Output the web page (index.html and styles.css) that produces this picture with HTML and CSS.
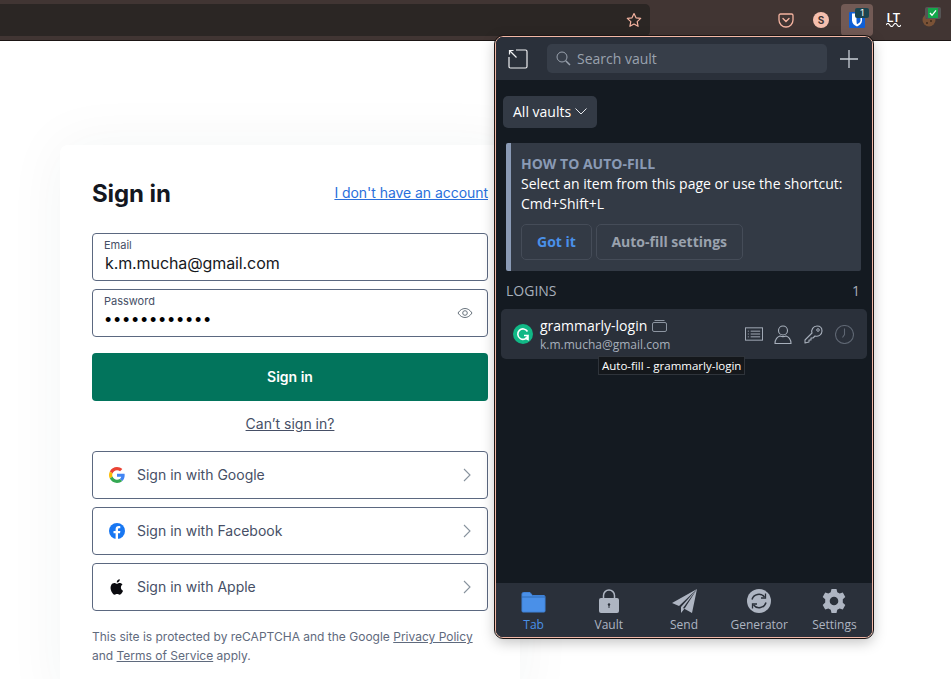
FILE: index.html
```html
<!DOCTYPE html>
<html lang="en">
<head>
    <meta charset="UTF-8">
    <title>Sign in</title>
    <link rel="stylesheet" href="styles.css">
</head>
<body>
    <header class="toolbar">
        <div class="urlbar">
            <svg class="star" width="16" height="16" viewBox="0 0 16 16"><path d="M8 1.500l2 4.300 4.700.6-3.500 3.200.9 4.700L8 12l-4.100 2.300.9-4.700L1.300 6.400 6 5.800z" fill="none" stroke="#f4b3a0" stroke-width="1.200" stroke-linejoin="round"/></svg>
        </div>
        <div class="extensions">
            <svg class="ext-pocket" width="16" height="15" viewBox="0 0 16 15"><path d="M1 2.500A1.500 1.500 0 0 1 2.500 1h11A1.500 1.500 0 0 1 15 2.500V7a7 7 0 0 1-14 0z" fill="none" stroke="#f4b3a0" stroke-width="1.300"/><path d="M5 5.500L8 8.500l3-3" fill="none" stroke="#f4b3a0" stroke-width="1.400" stroke-linecap="round"/></svg>
            <span class="ext-s">S</span>
            <div class="ext-bitwarden">
                <svg width="16" height="16" viewBox="0 0 16 16"><rect width="16" height="16" rx="1" fill="#0f5fd6"/><path d="M3 1.500h10v7c0 3-2.500 4.800-5 6-2.500-1.200-5-3-5-6z" fill="#fff"/><path d="M7.500 2h4v6.500c0 1.800-1.800 3-3.500 3.800-.4-1-.5-2.500-.5-4z" fill="#0f5fd6"/></svg>
                <span class="badge">1</span>
            </div>
            <div class="ext-lt">
                <span>LT</span>
                <svg width="15" height="4" viewBox="0 0 16 4"><path d="M0 2q2-3.500 4 0t4 0 4 0 4 0" fill="none" stroke="#fff" stroke-width="1.200"/></svg>
            </div>
            <div class="ext-cookie">
                <svg width="14" height="14" viewBox="0 0 14 14"><circle cx="7" cy="7" r="6.500" fill="#7a5236"/><circle cx="5" cy="5" r="1" fill="#3d2a1c"/><circle cx="9" cy="8" r="1" fill="#3d2a1c"/><circle cx="5" cy="10" r="1" fill="#3d2a1c"/></svg>
                <span class="check"><svg width="10" height="10" viewBox="0 0 10 10"><rect width="10" height="10" fill="#12a84a"/><path d="M2 5l2 2.300L8 2.300" fill="none" stroke="#fff" stroke-width="1.300"/></svg></span>
            </div>
        </div>
    </header>

    <main class="page">
        <section class="card">
            <div class="card-head">
                <h1>Sign in</h1>
                <a href="#" class="link-blue">I don't have an account</a>
            </div>
            <div class="field">
                <label>Email</label>
                <div class="value">k.m.mucha@gmail.com</div>
            </div>
            <div class="field">
                <label>Password</label>
                <div class="value dots">••••••••••••</div>
                <svg class="eye" width="16" height="12" viewBox="0 0 16 12"><path d="M1 6c2-3 4.300-4.500 7-4.500S13 3 15 6c-2 3-4.300 4.500-7 4.500S3 9 1 6z" fill="none" stroke="#68737d" stroke-width="1"/><circle cx="8" cy="6" r="2.300" fill="none" stroke="#68737d" stroke-width="1"/></svg>
            </div>
            <button class="submit">Sign in</button>
            <a href="#" class="cant">Can’t sign in?</a>
            <div class="social">
                <svg width="16" height="16" viewBox="0 0 48 48"><path fill="#EA4335" d="M24 9.500c3.500 0 6.700 1.200 9.200 3.600l6.900-6.900C35.900 2.400 30.500 0 24 0 14.600 0 6.500 5.400 2.600 13.200l8 6.200C12.500 13.700 17.800 9.500 24 9.500z"/><path fill="#4285F4" d="M47 24.500c0-1.600-.1-3.100-.4-4.500H24v9h12.900c-.6 3-2.200 5.500-4.800 7.200l7.700 6C44.300 38 47 31.800 47 24.500z"/><path fill="#FBBC05" d="M10.500 28.600c-.5-1.400-.8-3-.8-4.600s.3-3.200.8-4.600l-8-6.200C1 16.400 0 20.100 0 24s1 7.600 2.600 10.800z"/><path fill="#34A853" d="M24 48c6.500 0 11.900-2.100 15.900-5.800l-7.700-6c-2.200 1.500-5 2.300-8.200 2.300-6.200 0-11.500-4.200-13.400-9.900l-8 6.200C6.500 42.600 14.600 48 24 48z"/></svg>
                <span class="social-label">Sign in with Google</span>
                <svg class="chev" width="8" height="14" viewBox="0 0 8 14"><path d="M1 1l6 6-6 6" fill="none" stroke="#87929d" stroke-width="1.100"/></svg>
            </div>
            <div class="social">
                <svg width="16" height="16" viewBox="0 0 16 16"><circle cx="8" cy="8" r="8" fill="#1877f2"/><path d="M11 10.300l.4-2.300H9V6.500c0-.7.300-1.200 1.300-1.200h1V3.300S10.500 3.100 9.600 3.100C7.800 3.100 6.600 4.200 6.600 6.200V8H4.500v2.300h2.100v5.600c.8.100 1.600.100 2.400 0v-5.600z" fill="#fff"/></svg>
                <span class="social-label">Sign in with Facebook</span>
                <svg class="chev" width="8" height="14" viewBox="0 0 8 14"><path d="M1 1l6 6-6 6" fill="none" stroke="#87929d" stroke-width="1.100"/></svg>
            </div>
            <div class="social">
                <svg width="16" height="16" viewBox="2.200 1.800 11.800 12.800"><path d="M11.200 8.500c0-1.500 1.200-2.200 1.300-2.300-.7-1-1.800-1.200-2.200-1.200-.9-.1-1.800.6-2.300.6s-1.200-.6-2-.6c-1 0-2 .6-2.500 1.500-1.100 1.900-.3 4.700.8 6.200.5.800 1.100 1.600 1.900 1.600s1.100-.5 2-.5 1.200.5 2 .5 1.400-.8 1.900-1.500c.6-.9.800-1.700.8-1.700s-1.700-.7-1.700-2.600zM9.700 3.800c.4-.5.700-1.200.6-1.900-.6 0-1.300.4-1.800.9-.4.500-.7 1.200-.6 1.800.7.100 1.300-.3 1.800-.8z" fill="#0b0b0f"/></svg>
                <span class="social-label">Sign in with Apple</span>
                <svg class="chev" width="8" height="14" viewBox="0 0 8 14"><path d="M1 1l6 6-6 6" fill="none" stroke="#87929d" stroke-width="1.100"/></svg>
            </div>
            <p class="legal">This site is protected by reCAPTCHA and the Google <a href="#">Privacy Policy</a> and <a href="#">Terms of Service</a> apply.</p>
        </section>
    </main>

    <aside class="popup">
        <div class="popup-top">
            <svg class="popout" width="20" height="20" viewBox="0 0 20 20"><path d="M8 1H17.500A1.500 1.500 0 0 1 19 2.500V17.500A1.500 1.500 0 0 1 17.500 19H2.500A1.500 1.500 0 0 1 1 17.500V8" fill="none" stroke="#f0f1f3" stroke-width="1.200"/><path d="M1.500 5.500v-4h4M1.500 1.500L8.500 8.500" fill="none" stroke="#f0f1f3" stroke-width="1.200"/></svg>
            <div class="search">
                <svg width="15" height="15" viewBox="0 0 15 15"><circle cx="6" cy="6" r="5" fill="none" stroke="#9aa2ae" stroke-width="1"/><path d="M9.700 9.700L14 14" stroke="#9aa2ae" stroke-width="1.500"/></svg>
                <span>Search vault</span>
            </div>
            <svg class="plus" width="20" height="20" viewBox="0 0 20 20"><path d="M10 1v18M1 10h18" stroke="#c9ced6" stroke-width="1.300"/></svg>
        </div>
        <div class="popup-body">
            <div class="vaults">All vaults
                <svg width="12" height="7" viewBox="0 0 12 7"><path d="M.5.500L6 6l5.500-5.500" fill="none" stroke="#e6e8ec" stroke-width="1"/></svg>
            </div>
            <div class="callout">
                <h2>HOW TO AUTO-FILL</h2>
                <p>Select an item from this page or use the shortcut: Cmd+Shift+L</p>
                <div class="callout-btns">
                    <span class="btn btn-blue">Got it</span>
                    <span class="btn btn-settings">Auto-fill settings</span>
                </div>
            </div>
            <div class="list-head"><span>LOGINS</span><span>1</span></div>
            <div class="login">
                <span class="g-icon"><svg width="14" height="14" viewBox="0 0 14 14"><path d="M11.500 4.500A5.200 5.200 0 1 0 12 8.500H8M9 11l3 1.500V9" fill="none" stroke="#fff" stroke-width="1.600"/></svg></span>
                <div class="login-text">
                    <div class="login-name">grammarly-login
                        <svg width="15" height="13" viewBox="0 0 15 13"><rect x=".5" y="3.500" width="14" height="9" rx="1.500" fill="none" stroke="#8d95a1"/><path d="M2.500 1.500h10" stroke="#8d95a1"/></svg>
                    </div>
                    <div class="login-user">k.m.mucha@gmail.com</div>
                </div>
                <div class="login-actions">
                    <svg class="doc" width="18" height="14" viewBox="0 0 19 14"><rect x=".5" y=".5" width="18" height="13" fill="none" stroke="#a7afbb"/><path d="M3 4h1M3 7h1M3 10h1M6 4h10M6 7h10M6 10h10" stroke="#a7afbb"/></svg>
                    <svg width="18" height="19" viewBox="0 0 18 19"><circle cx="9" cy="5.500" r="4.500" fill="none" stroke="#a7afbb" stroke-width="1.100"/><path d="M1 18.500c0-4 2.500-7 5-7.500 2 .8 4 .8 6 0 2.500.5 5 3.500 5 7.500z" fill="none" stroke="#a7afbb" stroke-width="1.100"/></svg>
                    <svg width="19" height="19" viewBox="0 0 19 19"><path d="M1 18v-3l7-7c-1-3 1-7 5-7 3 0 5 2 5 5 0 4-4 6-7 5l-2 2H7v2H5v2z" fill="none" stroke="#a7afbb" stroke-width="1.100" stroke-linejoin="round"/><circle cx="14" cy="5" r="1.300" fill="none" stroke="#a7afbb"/></svg>
                    <svg width="19" height="19" viewBox="0 0 19 19"><circle cx="9.500" cy="9.500" r="9" fill="none" stroke="#5e6672" stroke-width="1.100"/><path d="M9.500 3.500v6l-2 3" fill="none" stroke="#5e6672" stroke-width="1.100"/></svg>
                </div>
            </div>
            <div class="tooltip">Auto-fill - grammarly-login</div>
        </div>
        <nav class="tabs">
            <div class="tab active">
                <svg width="25" height="22" viewBox="0 0 25 22"><path d="M1 3a1.500 1.500 0 0 1 1.500-1.500H9L11.500 4.500H23a1.200 1.200 0 0 1 1 1.200V20a1 1 0 0 1-1 1H2a1 1 0 0 1-1-1z" fill="#4a90e8" stroke="#3f82d8"/><path d="M1 6h23" stroke="#2f6db8"/></svg>
                <span>Tab</span>
            </div>
            <div class="tab">
                <svg width="20" height="24" viewBox="0 0 20 24"><path d="M4.500 10V6.500a5.500 5.500 0 0 1 11 0V10" fill="none" stroke="#aeb5c2" stroke-width="1.500"/><rect y="9" width="20" height="15" rx="2" fill="#aeb5c2"/><circle cx="10" cy="15.500" r="1.200" fill="#2a303a"/><path d="M10 16v3" stroke="#2a303a" stroke-width="1"/></svg>
                <span>Vault</span>
            </div>
            <div class="tab">
                <svg width="25" height="24" viewBox="0 0 25 24"><path d="M25 0L0 14l7 3zM25 0L9 18v6l4-5zM25 0L20 24l-9-5z" fill="#aeb5c2"/></svg>
                <span>Send</span>
            </div>
            <div class="tab">
                <svg width="24" height="24" viewBox="0 0 24 24"><circle cx="12" cy="12" r="12" fill="#aeb5c2"/><path d="M5 10.500a7.200 7.200 0 0 1 12.500-2.500M19 13.500a7.200 7.200 0 0 1-12.500 2.500" fill="none" stroke="#2a303a" stroke-width="1.500"/><path d="M18.500 4.500V9H14M5.500 19.500V15H10" fill="none" stroke="#2a303a" stroke-width="1.300"/></svg>
                <span>Generator</span>
            </div>
            <div class="tab">
                <svg width="24" height="24" viewBox="0 0 24 24"><path d="M9.500 0h5l.8 3.300 2.300 1.300 3.200-1 2.500 4.400-2.500 2.300v3.400l2.500 2.300-2.500 4.400-3.200-1-2.300 1.300-.8 3.300h-5l-.8-3.300-2.300-1.300-3.200 1L.700 15.900l2.500-2.300v-3.400L.700 7.900l2.500-4.400 3.200 1 2.300-1.300z" fill="#aeb5c2"/><circle cx="12" cy="12" r="4.300" fill="#2a303a"/></svg>
                <span>Settings</span>
            </div>
        </nav>
    </aside>
</body>
</html>
```

FILE: styles.css
```css
html, body {
    margin: 0;
    height: 679px;
    overflow: hidden;
}
body {
    background: #fff;
    font-family: Inter, "Liberation Sans", sans-serif;
    color: #2f3941;
    position: relative;
}
.toolbar {
    height: 36px;
    padding-top: 4px;
    background: #413533;
    border-bottom: 1px solid #1b1514;
    display: flex;
    align-items: flex-start;
    justify-content: space-between;
}
.urlbar {
    width: 650px;
    height: 32px;
    background: #2b2624;
    border-radius: 0 5px 5px 0;
    display: flex;
    align-items: center;
    justify-content: flex-end;
    padding-right: 8px;
    box-sizing: border-box;
}
.extensions {
    height: 32px;
    display: flex;
    align-items: center;
    padding-right: 15px;
}
.ext-pocket {
    margin-right: 19px;
}
.ext-s {
    width: 16px;
    height: 16px;
    border-radius: 50%;
    background: #f5bfae;
    color: #413533;
    font-size: 10px;
    font-weight: 700;
    text-align: center;
    line-height: 16px;
    margin-right: 12px;
}
.ext-bitwarden {
    width: 32px;
    height: 32px;
    background: #725a55;
    border-radius: 4px;
    display: flex;
    align-items: center;
    justify-content: center;
    position: relative;
    margin-right: 13px;
}
.badge {
    position: absolute;
    top: 4px;
    right: 4px;
    width: 14px;
    height: 10px;
    background: #1b4550;
    color: #fff;
    border-radius: 2px;
    font-size: 9px;
    line-height: 10px;
    text-align: center;
}
.ext-lt {
    width: 15px;
    display: flex;
    flex-direction: column;
    align-items: center;
    color: #fff;
    font-size: 12px;
    font-weight: 600;
    line-height: 10px;
    margin-right: 21px;
}
.ext-cookie {
    position: relative;
    width: 14px;
    height: 14px;
    display: flex;
}
.check {
    position: absolute;
    top: -6px;
    left: 3px;
    width: 16px;
    height: 12px;
    background: #555;
    border-radius: 2px;
    display: flex;
    justify-content: center;
    align-items: center;
}
.page {
    height: 638px;
    padding-left: 60px;
    padding-top: 104px;
    box-sizing: border-box;
}
.card {
    width: 460px;
    height: 560px;
    background: #fff;
    border-radius: 8px 8px 0 0;
    padding: 32px;
    box-sizing: border-box;
    box-shadow: 0 0 60px rgba(47, 57, 65, 0.05);
}
.card-head {
    display: flex;
    justify-content: space-between;
    align-items: center;
    margin-bottom: 24px;
    height: 32px;
}
h1 {
    margin: 0;
    font-size: 24px;
    font-weight: 700;
    color: #14171f;
    letter-spacing: -0.1px;
}
.link-blue {
    color: #2a6fdb;
    font-size: 14px;
    letter-spacing: -0.05px;
    margin-bottom: 2px;
}
.field {
    position: relative;
    height: 48px;
    border: 1px solid #5b6880;
    border-radius: 4px;
    padding: 5px 12px;
    box-sizing: border-box;
    margin-bottom: 8px;
}
.field label {
    display: block;
    font-size: 11px;
    line-height: 13px;
    color: #464f66;
    margin-left: -1px;
}
.value {
    margin-top: 1px;
    font-size: 16px;
    line-height: 20px;
    letter-spacing: -0.1px;
    color: #16181d;
}
.dots {
    margin-top: 2px;
    font-size: 18px;
    letter-spacing: 2.7px;
    font-family: "Liberation Sans", sans-serif;
    color: #000;
}
.eye {
    position: absolute;
    right: 14px;
    top: 17px;
}
.submit {
    display: block;
    width: 100%;
    height: 48px;
    margin-top: 16px;
    padding: 0 0 2px;
    background: #02745c;
    color: #fff;
    border: none;
    border-radius: 4px;
    font-family: inherit;
    font-size: 14px;
    font-weight: 600;
}
.cant {
    display: block;
    text-align: center;
    margin: 14px 0 18px;
    font-size: 14px;
    line-height: 18px;
    color: #464f66;
}
.social {
    height: 48px;
    border: 1px solid #5b6880;
    border-radius: 4px;
    display: flex;
    align-items: center;
    gap: 12px;
    padding: 0 16px;
    box-sizing: border-box;
    margin-bottom: 8px;
    font-size: 14px;
    color: #464f66;
}
.social-label {
    margin-bottom: 2px;
}
.chev {
    margin-left: auto;
}
.legal {
    margin: 16px 0 0;
    font-size: 12px;
    line-height: 19px;
    color: #5f6a7d;
}
.legal a {
    color: inherit;
}
.popup {
    position: absolute;
    left: 495px;
    top: 36px;
    width: 378px;
    height: 602px;
    box-sizing: border-box;
    background: #141a21;
    border: 1px solid #f2b8a6;
    outline: 1px solid #1b1514;
    border-radius: 8px;
    overflow: hidden;
    font-family: "Open Sans", sans-serif;
    color: #fff;
    display: flex;
    flex-direction: column;
    box-shadow: 0 4px 14px rgba(0, 0, 0, 0.25);
}
.popup-top {
    height: 43px;
    background: #2a303a;
    display: flex;
    align-items: center;
    padding: 0 12px;
    gap: 12px;
    flex-shrink: 0;
}
.popout {
    margin-right: 7px;
}
.search {
    width: 280px;
    height: 29px;
    background: #373e49;
    border-radius: 5px;
    display: flex;
    align-items: center;
    gap: 6px;
    padding-left: 9px;
    box-sizing: border-box;
    font-size: 14px;
    color: #9aa2ae;
}
.popup-body {
    flex: 1;
    padding: 16px 12px 0 7px;
    position: relative;
}
.vaults {
    display: inline-flex;
    align-items: center;
    gap: 4px;
    height: 32px;
    padding: 0 10px 2px;
    box-sizing: border-box;
    background: #333a45;
    border-radius: 5px;
    font-size: 14px;
}
.callout {
    margin: 15px 0 0 3px;
    background: #333a45;
    border-left: 5px solid #8a9ab5;
    border-radius: 2px;
    padding: 11px 10px 10px 10px;
    width: 355px;
    box-sizing: border-box;
    height: 128px;
}
.callout h2 {
    margin: 0;
    font-size: 14px;
    line-height: 20px;
    color: #8a9ab5;
    font-weight: 700;
}
.callout p {
    margin: 0;
    font-size: 14px;
    line-height: 20px;
    width: 330px;
}
.callout-btns {
    display: flex;
    gap: 4px;
    margin-top: 10px;
}
.btn {
    display: inline-flex;
    align-items: center;
    justify-content: center;
    height: 36px;
    padding: 0 15px 2px;
    border: 1px solid #454c58;
    border-radius: 5px;
    font-size: 14px;
    font-weight: 700;
    color: #9aa2ae;
    box-sizing: border-box;
}
.btn-blue {
    color: #4a90e8;
}
.btn-settings {
    padding: 0 14.5px 2px;
}
.list-head {
    display: flex;
    justify-content: space-between;
    margin: 10px 0 0 3px;
    height: 20px;
    font-size: 14px;
    line-height: 20px;
    color: #a7afbb;
}
.login {
    margin: 8px -7px 0 -2px;
    height: 50px;
    background: #2a303a;
    border-radius: 5px;
    display: flex;
    align-items: center;
    padding: 0 13px 0 12px;
}
.g-icon {
    width: 20px;
    height: 20px;
    border-radius: 50%;
    background: #11b886;
    display: flex;
    align-items: center;
    justify-content: center;
    margin-right: 7px;
}
.login-name {
    font-size: 14px;
    line-height: 21px;
    display: flex;
    align-items: center;
    gap: 5px;
}
.login-user {
    font-size: 12px;
    line-height: 18px;
    color: #a7afbb;
}
.login-actions {
    margin-left: auto;
    display: flex;
    align-items: center;
    gap: 12px;
}
.login-actions .doc {
    margin-right: -1px;
}
.tooltip {
    position: absolute;
    left: 102px;
    top: 276px;
    height: 17px;
    padding: 0 3px;
    background: #14171b;
    border: 1px solid #2f343b;
    font-size: 11.5px;
    line-height: 17px;
    white-space: nowrap;
}
.tabs {
    height: 54px;
    background: #2a303a;
    display: flex;
    flex-shrink: 0;
}
.tab {
    flex: 1;
    display: flex;
    flex-direction: column;
    align-items: center;
    justify-content: flex-end;
    gap: 3px;
    font-size: 12px;
    color: #aeb5c2;
    padding-bottom: 4px;
}
.tab.active {
    color: #4a90e8;
}
```
